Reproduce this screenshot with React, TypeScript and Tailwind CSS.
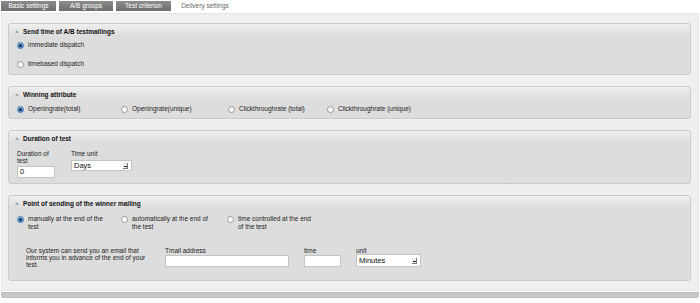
import React from 'react';

const Radio = ({ checked }: { checked?: boolean }) =>
  checked ? (
    <span className="mt-[1px] flex h-[7px] w-[7px] shrink-0 items-center justify-center rounded-full border border-[#3f78b8] bg-gradient-to-b from-[#9cc6f0] to-[#4a8ad2]">
      <span className="h-[3px] w-[3px] rounded-full bg-[#1b2a3c]" />
    </span>
  ) : (
    <span className="mt-[1px] h-[7px] w-[7px] shrink-0 rounded-full border border-[#9a9a9a] bg-gradient-to-b from-[#f4f4f4] to-white" />
  );

const Option = ({ checked, children, w }: { checked?: boolean; children: React.ReactNode; w: string }) => (
  <label className={`flex items-start gap-[4px] ${w}`}>
    <Radio checked={checked} />
    <span className="leading-[8px]">{children}</span>
  </label>
);

const Panel = ({ title, children }: { title: string; children: React.ReactNode }) => (
  <div className="rounded-[3px] border border-[#cbcbcb] bg-[#dddddd] bg-gradient-to-b from-[#efefef] from-0% to-[#dddddd] to-[12px]">
    <div className="flex h-[14px] items-center pl-[6px] pt-[1px]">
      <svg width="4" height="3" viewBox="0 0 4 3" className="mr-[4px]">
        <path d="M2 0 L4 3 L0 3 Z" fill="#a8a8a8" />
      </svg>
      <span className="font-bold text-[#111]">{title}</span>
    </div>
    {children}
  </div>
);

const Select = ({ value, w }: { value: string; w: string }) => (
  <div className={`flex items-center justify-between border border-[#c4c4c4] bg-white pl-[2px] pr-[3px] text-[7.5px] text-[#111] ${w}`}>
    <span>{value}</span>
    <span className="flex h-[6px] w-[5px] items-end justify-center border-r border-b border-[#777] bg-[#eee]">
      <span className="mb-[1px] h-[1px] w-[3px] bg-[#222]" />
    </span>
  </div>
);

const Tab = ({ label, active, w }: { label: string; active?: boolean; w: string }) => (
  <div
    className={`flex h-[10px] items-center justify-center ${w} ${
      active ? 'bg-white text-[#666]' : 'bg-gradient-to-b from-[#8c8c8c] to-[#6e6e6e] text-white'
    }`}
  >
    {label}
  </div>
);

export default function App() {
  return (
    <div className="h-[303px] w-[700px] bg-white text-[6.5px] text-[#222]" style={{ fontFamily: '"Liberation Sans", Arial, sans-serif' }}>
      <div className="flex h-[12px] gap-[3px] pl-[1px] pt-[1px]">
        <Tab label="Basic settings" w="w-[55px]" />
        <Tab label="A/B groups" w="w-[54px]" />
        <Tab label="Test criterion" w="w-[55px]" />
        <Tab label="Delivery settings" w="w-[62px]" active />
      </div>
      <div className="mx-[1px] mt-[1px] flex flex-col gap-[11px] border border-[#e6e6e6] bg-[#efefef] pb-[9px] pl-[6px] pr-[7px] pt-[9px]">
        <Panel title="Send time of A/B testmailings">
          <div className="flex flex-col gap-[9px] pb-[4px] pl-[8px] pt-[3px]">
            <Option checked w="h-[10px] items-center">immediate dispatch</Option>
            <Option w="h-[10px] items-center">timebased dispatch</Option>
          </div>
        </Panel>
        <Panel title="Winning attribute">
          <div className="mb-[4px] mt-[3px] flex h-[10px] items-center pl-[8px]">
            <Option checked w="w-[104px]">Openingrate(total)</Option>
            <Option w="w-[107px]">Openingrate(unique)</Option>
            <Option w="w-[99px]">Clickthroughrate (total)</Option>
            <Option w="w-[120px]">Clickthroughrate (unique)</Option>
          </div>
        </Panel>
        <Panel title="Duration of test">
          <div className="flex gap-[16px] pb-[5px] pl-[8px] pt-[5px]">
            <div className="flex w-[38px] flex-col gap-[2px]">
              <span className="leading-[7px]">
                Duration of
                <br />
                test
              </span>
              <div className="flex h-[12px] items-center border border-[#c4c4c4] bg-white pl-[2px] text-[7.5px] text-[#111]">0</div>
            </div>
            <div className="flex flex-col gap-[3px]">
              <span className="leading-[7px]">Time unit</span>
              <Select value="Days" w="h-[11px] w-[61px]" />
            </div>
          </div>
        </Panel>
        <Panel title="Point of sending of the winner mailing">
          <div className="flex flex-col pb-[12px] pl-[8px] pt-[5px]">
            <div className="flex">
              <Option checked w="w-[104px]">
                manually at the end of the
                <br />
                test
              </Option>
              <Option w="w-[106px]">
                automatically at the end of
                <br />
                the test
              </Option>
              <Option w="w-[110px]">
                time controlled at the end
                <br />
                of the test
              </Option>
            </div>
            <div className="mt-[16px] flex pl-[9px]">
              <p className="w-[139px] leading-[7px]">
                Our system can send you an email that
                <br />
                informs you in advance of the end of your
                <br />
                test.
              </p>
              <div className="flex w-[139px] flex-col gap-[1px]">
                <span className="leading-[7px]">Tmail address</span>
                <div className="h-[12px] w-[124px] border border-[#c4c4c4] bg-white" />
              </div>
              <div className="flex w-[52px] flex-col gap-[1px]">
                <span className="leading-[7px]">time</span>
                <div className="h-[12px] w-[37px] border border-[#c4c4c4] bg-white" />
              </div>
              <div className="flex flex-col">
                <span className="leading-[7px]">unit</span>
                <Select value="Minutes" w="h-[13px] w-[65px]" />
              </div>
            </div>
          </div>
        </Panel>
      </div>
      <div className="mx-[1px] mt-[1px] h-[6px] rounded-b-[2px] border border-[#bdbdbd] bg-[#c9c9c9]" />
    </div>
  );
}
